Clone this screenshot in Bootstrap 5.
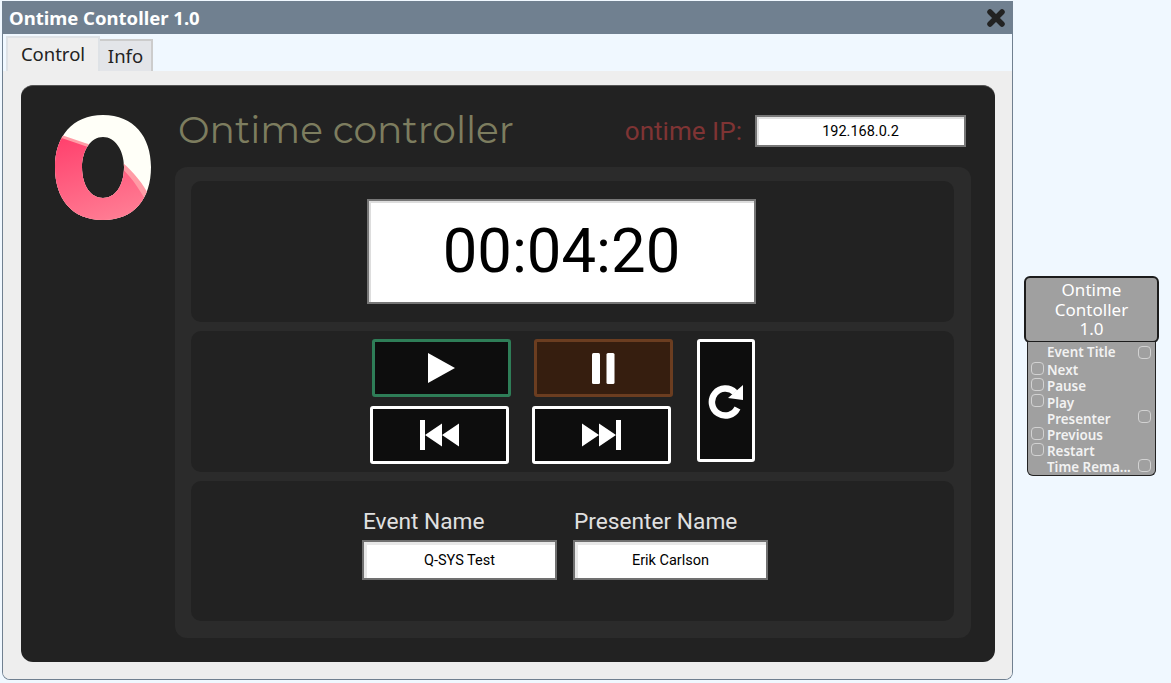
<!DOCTYPE html>
<html lang="en">
<head>
  <meta charset="UTF-8" />
  <meta name="viewport" content="width=device-width, initial-scale=1.0" />
  <title>Ontime Controller</title>
  <link href="https://cdn.jsdelivr.net/npm/bootstrap@5.3.0/dist/css/bootstrap.min.css" rel="stylesheet">
  <style>
    html, body { height: 683px; overflow: hidden; }
    body { background: #f0f8ff; font-family: "Roboto", sans-serif; }
    .plugin-window { width: 1011px; height: 679px; margin: 1px 0 0 2px; background: #f0f8ff; border: 1px solid #708090; border-top: 0; border-radius: 0 0 8px 8px; overflow: hidden; }
    .title-bar { height: 33px; background: #708090; padding: 0 6px 0 6px; }
    .title-bar span { font: 700 18.5px/33px "Noto Sans", sans-serif; color: #fff; }
    .tab-row { height: 37px; padding: 2px 0 0 3px; border: 0; }
    .tab-row .nav-link { font: 400 18.5px/32px "Noto Sans", sans-serif; color: #222; padding: 0; border: 2px solid #ccc; border-bottom: 0; border-radius: 0; text-align: center; }
    .tab-row .nav-link.active { width: 94px; height: 35px; background: #eee; color: #222; }
    .tab-row .nav-link.other { width: 53px; height: 32px; margin-top: 3px; border-left: 0; background: #e3e5e9; line-height: 29px; }
    .tab-body { height: 609px; background: #eee; padding: 14px 17px 18px 18px; }
    .dark-panel { height: 577px; background: #222; border-radius: 12px; border-top: 1px solid #555; }
    .logo-col { width: 154px; padding: 28px 0 0 33px; }
    .main-col { width: 796px; }
    .head-row { height: 81px; padding: 0 5px 0 3px; }
    .app-title { font: 400 37.6px/1 "Montserrat", "Inter", sans-serif; color: #7d7d5f; margin-top: 7px; }
    .ip-group { margin-top: 2px; }
    .ip-label { font-size: 26.1px; font-weight: 400; color: #7f3434; margin-right: 13px; margin-top: 9px; }
    .inner-panel { height: 471px; background: #2b2b2b; border-radius: 12px; padding: 14px 17px 17px 16px; gap: 9px; }
    .sect { height: 141px; background: #222; border-radius: 10px; }
    .sect-timer { padding-left: 176px; }
    .sect-btns { padding: 8px 0 0 179px; }
    .sect-names { height: 140px; padding: 28px 0 0 171px; gap: 16px; }
    .time-box { width: 389px; height: 105px; background: #fff; border: 2px solid #777; box-shadow: inset 2px 2px 0 #ddd; font-size: 61.6px; color: #000; }
    .ctl-btn { width: 139px; height: 58px; padding: 0; background: #0d0d0d; border: 3px solid #fff; border-radius: 3px; }
    .ctl-btn:hover { background: #0d0d0d; border-color: #fff; }
    .btn-play, .btn-play:hover { border-color: #2e7d57; }
    .btn-pause, .btn-pause:hover { background: #361e0f; border-color: #6b3d20; }
    .btn-restart { width: 58px; height: 123px; margin-left: 22px; }
    .btn-grid { width: 305px; gap: 9px; }
    .btn-line { gap: 23px; }
    .btn-line-top { padding-left: 2px; }
    .ip-input, .name-input { text-align: center; color: #000; background: #fff; border-radius: 0; padding: 0; font-size: 14.5px; }
    .ip-input { width: 211px; height: 32px; border: 2px solid #777; box-shadow: inset 2px 2px 0 #e2e2e2; }
    .name-input { width: 195px; height: 40px; border: 2px solid #707070; box-shadow: inset 3px 3px 0 #e8e8e8; }
    .ip-input:focus, .name-input:focus { border-color: #777; }
    .name-label { font-size: 22.7px; line-height: 26px; color: #e0e0e0; margin: 0 0 5px 1px; }
    .side-block { width: 135px; margin: 276px 0 0 11px; }
    .side-head { width: 135px; height: 67px; background: #a0a0a0; border: 2px solid #1c1c1c; border-radius: 6px; color: #fff; text-align: center; font: 400 17px/19.5px "Noto Sans", sans-serif; padding-top: 2px; }
    .side-body { width: 129px; height: 134px; margin: -1px 0 0 3px; background: #a0a0a0; border: 1px solid #222; border-top: 0; border-radius: 0 0 6px 6px; padding: 2px 4px 0 3px; }
    .pin-row { height: 16.2px; color: #f2f2f2; font: 600 13.4px/16.2px "Noto Sans", sans-serif; white-space: nowrap; }
    .pin-box { width: 13px; height: 13px; margin: 0; flex: none; background: transparent; border: 1px solid #d2d2d2; border-radius: 4px; }
    .pin-gap { width: 13px; flex: none; }
    .pin-name { flex: 1; padding-left: 3px; overflow: hidden; }
    .pin-low .pin-name { padding-top: 4px; }
  </style>
</head>
<body>
  <div class="d-flex">
    <div class="plugin-window">
      <div class="title-bar d-flex align-items-center justify-content-between">
        <span>Ontime Contoller 1.0</span>
        <svg width="20" height="20" viewBox="0 0 20 20">
          <path d="M4 4 L16 16 M16 4 L4 16" stroke="#222" stroke-width="5.5" stroke-linecap="round" />
        </svg>
      </div>

      <ul class="nav nav-tabs tab-row">
        <li class="nav-item"><a class="nav-link active" href="#">Control</a></li>
        <li class="nav-item"><a class="nav-link other" href="#">Info</a></li>
      </ul>

      <div class="tab-body">
        <div class="dark-panel d-flex">
          <div class="logo-col">
            <svg width="98" height="107" viewBox="54 114 98 107">
              <defs>
                <linearGradient id="logoPink" x1="0.2" y1="0" x2="0.6" y2="1">
                  <stop offset="0" stop-color="#ff3f6c" />
                  <stop offset="1" stop-color="#ff8297" />
                </linearGradient>
                <clipPath id="logoClip">
                  <path clip-rule="evenodd" d="M103 115 C134 115 151 137 151 167 C151 199 134 220 103 220 C72 220 55 199 55 167 C55 137 72 115 103 115 Z M103 137 C91 137 82 150 82 167 C82 186 91 198 103 198 C115 198 124 186 124 167 C124 150 115 137 103 137 Z" />
                </clipPath>
              </defs>
              <g clip-path="url(#logoClip)">
                <rect x="50" y="110" width="110" height="115" fill="#fffff8" />
                <path d="M50 131 L85 143 C112 150 136 170 150 197 L160 230 L40 230 Z" fill="#ff9ca6" />
                <path d="M50 134 L85 146 C110 153 131 173 146 201 L160 230 L40 230 Z" fill="url(#logoPink)" />
              </g>
            </svg>
          </div>

          <div class="main-col d-flex flex-column">
            <div class="head-row d-flex align-items-center justify-content-between">
              <div class="app-title">Ontime controller</div>
              <div class="ip-group d-flex align-items-center">
                <span class="ip-label">ontime IP:</span>
                <input class="form-control ip-input mt-2" type="text" value="192.168.0.2">
              </div>
            </div>

            <div class="inner-panel d-flex flex-column">
              <div class="sect sect-timer d-flex align-items-center">
                <div class="time-box d-flex align-items-center justify-content-center">00:04:20</div>
              </div>

              <div class="sect sect-btns d-flex align-items-start">
                <div class="btn-grid d-flex flex-column">
                  <div class="btn-line btn-line-top d-flex">
                    <button class="btn ctl-btn btn-play d-flex align-items-center justify-content-center" type="button" aria-label="Play">
                      <svg width="27" height="30" viewBox="0 0 27 30"><path d="M0 0 L27 15 L0 30 Z" fill="#fff" /></svg>
                    </button>
                    <button class="btn ctl-btn btn-pause d-flex align-items-center justify-content-center" type="button" aria-label="Pause">
                      <svg width="23" height="31" viewBox="0 0 23 31"><rect x="0" width="8" height="31" rx="1.5" fill="#fff" /><rect x="14.5" width="8" height="31" rx="1.5" fill="#fff" /></svg>
                    </button>
                  </div>
                  <div class="btn-line d-flex">
                    <button class="btn ctl-btn d-flex align-items-center justify-content-center" type="button" aria-label="Previous">
                      <svg width="39" height="30" viewBox="0 0 39 30"><rect width="5" height="30" fill="#fff" /><path d="M5 15 L22 3.5 L22 26.5 Z M22 15 L39 3.5 L39 26.5 Z" fill="#fff" /></svg>
                    </button>
                    <button class="btn ctl-btn d-flex align-items-center justify-content-center" type="button" aria-label="Next">
                      <svg width="39" height="30" viewBox="0 0 39 30"><rect x="34" width="5" height="30" fill="#fff" /><path d="M34 15 L17 3.5 L17 26.5 Z M17 15 L0 3.5 L0 26.5 Z" fill="#fff" /></svg>
                    </button>
                  </div>
                </div>
                <button class="btn ctl-btn btn-restart d-flex align-items-center justify-content-center" type="button" aria-label="Restart">
                  <svg width="36" height="36" viewBox="0 0 36 36">
                    <path d="M27 9.5 A13.5 13.5 0 1 0 29.5 25" fill="none" stroke="#fff" stroke-width="6.5" />
                    <path d="M35 2 L35 17 L20 15 Z" fill="#fff" />
                  </svg>
                </button>
              </div>

              <div class="sect sect-names d-flex">
                <div>
                  <div class="name-label">Event Name</div>
                  <input class="form-control name-input" type="text" value="Q-SYS Test">
                </div>
                <div>
                  <div class="name-label">Presenter Name</div>
                  <input class="form-control name-input" type="text" value="Erik Carlson">
                </div>
              </div>
            </div>
          </div>
        </div>
      </div>
    </div>

    <div class="side-block">
      <div class="side-head">Ontime<br>Contoller<br>1.0</div>
      <div class="side-body">
        <div class="pin-row d-flex align-items-center"><span class="pin-gap"></span><span class="pin-name">Event Title</span><span class="pin-box"></span></div>
        <div class="pin-row pin-low d-flex align-items-center"><span class="pin-box"></span><span class="pin-name">Next</span><span class="pin-gap"></span></div>
        <div class="pin-row pin-low d-flex align-items-center"><span class="pin-box"></span><span class="pin-name">Pause</span><span class="pin-gap"></span></div>
        <div class="pin-row pin-low d-flex align-items-center"><span class="pin-box"></span><span class="pin-name">Play</span><span class="pin-gap"></span></div>
        <div class="pin-row pin-low d-flex align-items-center"><span class="pin-gap"></span><span class="pin-name">Presenter</span><span class="pin-box"></span></div>
        <div class="pin-row pin-low d-flex align-items-center"><span class="pin-box"></span><span class="pin-name">Previous</span><span class="pin-gap"></span></div>
        <div class="pin-row pin-low d-flex align-items-center"><span class="pin-box"></span><span class="pin-name">Restart</span><span class="pin-gap"></span></div>
        <div class="pin-row pin-low d-flex align-items-center"><span class="pin-gap"></span><span class="pin-name">Time Rema...</span><span class="pin-box"></span></div>
      </div>
    </div>
  </div>

  <script src="https://cdn.jsdelivr.net/npm/bootstrap@5.3.0/dist/js/bootstrap.bundle.min.js"></script>
</body>
</html>
